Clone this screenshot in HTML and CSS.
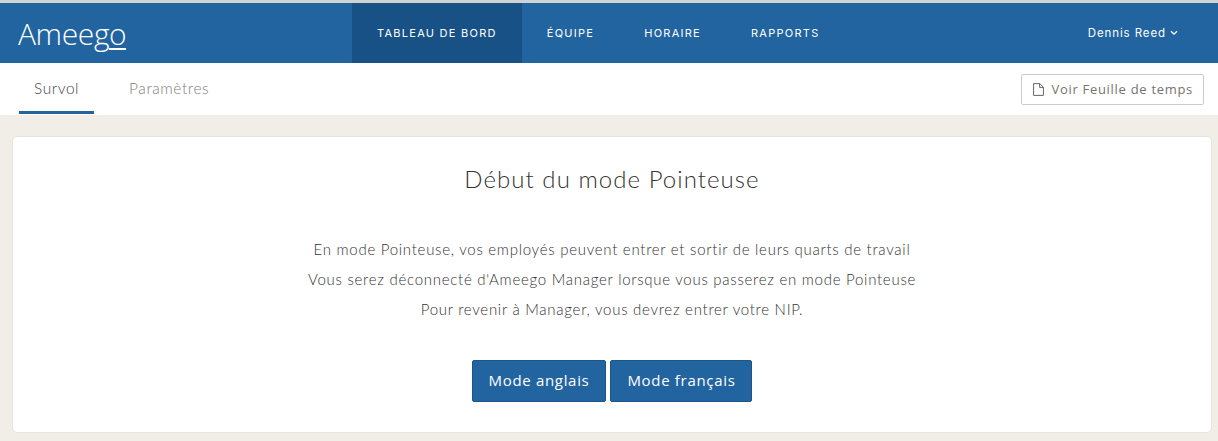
FILE: index.html
```html
<!DOCTYPE html>
<html lang="fr">
<head>
  <meta charset="UTF-8">
  <title>Ameego</title>
  <link rel="stylesheet" href="styles.css">
</head>
<body>
  <header class="topbar">
    <a class="logo">Ameeg<span class="logo-o">o</span></a>
    <nav class="main-nav">
      <a class="nav-item active">TABLEAU DE BORD</a>
      <a class="nav-item">ÉQUIPE</a>
      <a class="nav-item">HORAIRE</a>
      <a class="nav-item">RAPPORTS</a>
    </nav>
    <a class="user-menu">Dennis Reed
      <svg class="chevron" width="8" height="6" viewBox="0 0 8 6"><path d="M1 1.2l3 3 3-3" fill="none" stroke="#fff" stroke-width="1.3"/></svg>
    </a>
  </header>

  <div class="subbar">
    <div class="tabs">
      <a class="tab active">Survol</a>
      <a class="tab">Paramètres</a>
    </div>
    <a class="timesheet-btn">
      <svg width="11" height="13" viewBox="0 0 11 13"><path d="M.6.6h6.2l3.6 3.6v8.2H.6zM6.6.6v3.8h3.8" fill="none" stroke="#666" stroke-width="1"/></svg>
      Voir Feuille de temps
    </a>
  </div>

  <main class="content">
    <section class="card">
      <h1>Début du mode Pointeuse</h1>
      <p>En mode Pointeuse, vos employés peuvent entrer et sortir de leurs quarts de travail</p>
      <p>Vous serez déconnecté d'Ameego Manager lorsque vous passerez en mode Pointeuse</p>
      <p>Pour revenir à Manager, vous devrez entrer votre NIP.</p>
      <div class="actions">
        <button class="btn">Mode anglais</button>
        <button class="btn">Mode français</button>
      </div>
    </section>
  </main>
</body>
</html>
```

FILE: styles.css
```css
* { box-sizing: border-box; }

html, body { height: 100%; }

body {
  margin: 0;
  background: #f1eee8;
  font-family: Lato, "Open Sans", sans-serif;
  color: #555;
  overflow: hidden;
}

/* barre du haut */
.topbar {
  display: flex;
  align-items: stretch;
  height: 63px;
  border-top: 3px solid #d2d2d2;
  background: #22649f;
  color: #fff;
}
.logo {
  width: 352px;
  padding: 12px 0 0 18px;
  font-family: "Open Sans", sans-serif;
  font-size: 30px;
  font-weight: 300;
  line-height: 38px;
  letter-spacing: -0.4px;
  color: #fff;
}
.logo-o {
  display: inline-block;
  line-height: 28px;
  border-bottom: 2px solid #fff;
}
.main-nav { display: flex; }
.nav-item {
  display: flex;
  align-items: center;
  padding: 0 25px;
  font-family: Inter, sans-serif;
  font-size: 11px;
  font-weight: 400;
  letter-spacing: 1.27px;
}
.nav-item.active { background: #175186; }
.user-menu {
  display: flex;
  align-items: center;
  gap: 4px;
  margin-left: auto;
  padding-right: 40px;
  font-family: Inter, sans-serif;
  font-size: 11.5px;
  font-weight: 400;
  letter-spacing: 0.9px;
}

/* onglets */
.subbar {
  display: flex;
  justify-content: space-between;
  align-items: flex-start;
  height: 52px;
  padding: 0 14px 0 19px;
  background: #fff;
}
.tabs { display: flex; height: 51px; gap: 20px; }
.tab {
  display: flex;
  align-items: center;
  padding: 2px 15px 0;
  font-size: 15.5px;
  font-weight: 300;
  letter-spacing: 0.55px;
  color: #827e7b;
  border-bottom: 3px solid transparent;
}
.tab.active {
  color: #444;
  border-bottom-color: #22649f;
}
.timesheet-btn {
  display: flex;
  align-items: center;
  gap: 8px;
  height: 31px;
  margin-top: 11px;
  padding: 0 10px 1px 11px;
  border: 1px solid #ccc;
  border-radius: 2px;
  font-family: "Open Sans", sans-serif;
  font-size: 13px;
  letter-spacing: 0.7px;
  color: #77736f;
}

/* contenu */
.content { padding: 21px 6px 0 12px; }
.card {
  height: 297px;
  padding: 27px 0 0;
  background: #fff;
  border: 1px solid #e8e3dc;
  border-radius: 5px;
  text-align: center;
}
.card h1 {
  margin: 0 0 40px;
  font-size: 24px;
  line-height: 30px;
  font-weight: 300;
  letter-spacing: 1.05px;
  color: #333;
}
.card p {
  margin: 0;
  font-size: 15px;
  line-height: 30px;
  font-weight: 300;
  letter-spacing: 0.73px;
  color: #333;
}
.actions {
  display: flex;
  justify-content: center;
  gap: 4px;
  margin-top: 36px;
}
.btn {
  height: 42px;
  padding: 0 16px 2px;
  background: #22649f;
  border: 1px solid #1c5689;
  border-radius: 2px;
  color: #fff;
  font-family: "Open Sans", sans-serif;
  font-size: 15px;
  letter-spacing: 0.68px;
}
```
